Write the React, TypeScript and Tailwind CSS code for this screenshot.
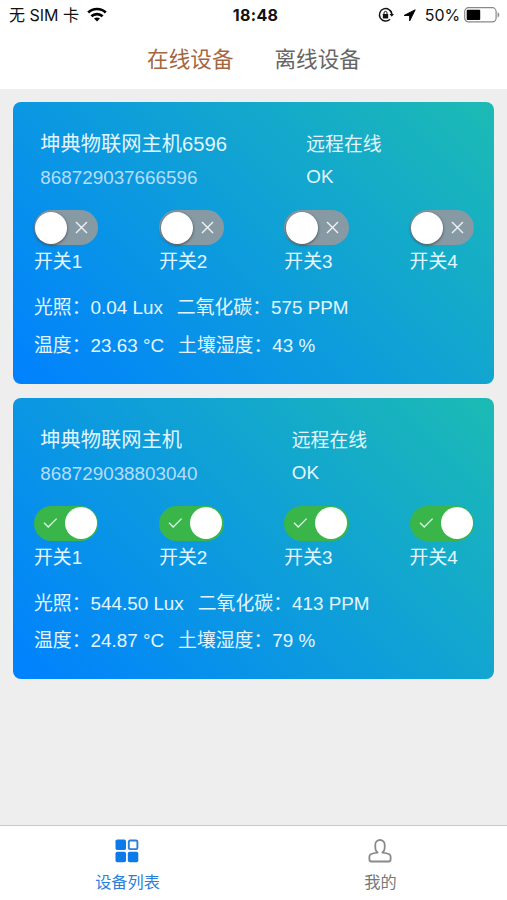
import React from "react";

type Device = {
  name: string;
  imei: string;
  switches: boolean;
  light: string;
  co2: string;
  temperature: string;
  humidity: string;
  headWidth: string;
};

const devices: Device[] = [
  {
    name: "坤典物联网主机6596",
    imei: "868729037666596",
    switches: false,
    light: "0.04 Lux",
    co2: "575 PPM",
    temperature: "23.63 °C",
    humidity: "43 %",
    headWidth: "w-[266px]",
  },
  {
    name: "坤典物联网主机",
    imei: "868729038803040",
    switches: true,
    light: "544.50 Lux",
    co2: "413 PPM",
    temperature: "24.87 °C",
    humidity: "79 %",
    headWidth: "w-[251.5px]",
  },
];

function StatusBar() {
  return (
    <div className="grid h-[30px] grid-cols-3 items-center pr-[7px] pl-[9px] font-['Inter','Noto_Sans_CJK_SC',sans-serif] text-[16px] leading-[30px] text-[#111]">
      <div className="flex items-center">
        <span className="whitespace-pre">无 SIM 卡</span>
        <svg className="mb-[2px] ml-[8px]" width="20" height="15" viewBox="0 0 20 15" fill="none" stroke="#000" strokeWidth="2.7">
          <path d="M1.2 5.5C6 .8 14 .8 18.8 5.5" />
          <path d="M4.4 9.2c3.1-2.9 8.1-2.9 11.2 0" />
          <path d="M10 14.6l-3-3c1.7-1.6 4.3-1.6 6 0z" fill="#000" stroke="none" />
        </svg>
      </div>
      <div className="pl-[2px] text-center text-[16px] font-bold tracking-[0.35px]">18:48</div>
      <div className="flex items-center justify-end">
        <svg width="17" height="16" viewBox="0 0 17 16" fill="none" stroke="#111" strokeWidth="1.4">
          <path d="M13.8 7.2A6.2 6.2 0 1 0 12 12.2" />
          <path d="M13.9 6.8A6.2 6.2 0 0 0 12 3.2" />
          <path d="M11.5 7h4.500l-2.200 2.800z" fill="#111" stroke="none" />
          <rect x="4.800" y="7" width="5.400" height="4.400" rx=".6" fill="#111" stroke="none" />
          <path d="M6 7.200V5.900a1.500 1.500 0 0 1 3 0v1.300" strokeWidth="1" />
        </svg>
        <svg className="ml-[8px]" width="13" height="13" viewBox="0 0 13 13">
          <path d="M12.2.8L1.2 6.4h5.5v5.4z" fill="#000" stroke="#000" strokeWidth="1" strokeLinejoin="round" />
        </svg>
        <span className="ml-[9px] tracking-[-0.1px]">50%</span>
        <svg className="ml-[4px]" width="36" height="16" viewBox="0 0 36 16">
          <rect x=".7" y=".7" width="31.4" height="14.2" rx="3.8" fill="#fff" stroke="#888" strokeWidth="1.2" />
          <rect x="2.7" y="2.7" width="13.5" height="10.2" rx="1" fill="#000" />
          <path d="M33.6 5.2c2.2.8 2.2 4.4 0 5.2z" fill="#888" />
        </svg>
      </div>
    </div>
  );
}

function Toggle({ on }: { on: boolean }) {
  if (on) {
    return (
      <div className="flex h-[35px] w-[64.5px] items-center justify-between rounded-full bg-[#39b54a] pr-[1.5px] pl-[9px]">
        <svg width="15" height="12" viewBox="0 0 15 12" fill="none" stroke="#dff8e4" strokeWidth="1.3">
          <path d="M1 5.8l4.2 4.2L13.6 1.6" />
        </svg>
        <div className="size-[32px] rounded-full bg-white" />
      </div>
    );
  }
  return (
    <div className="flex h-[35px] w-[64.5px] items-center justify-between rounded-full bg-[#8799a3] pr-[10px] pl-[1.5px]">
      <div className="size-[32px] rounded-full bg-white shadow-[0_1px_3px_rgba(0,0,0,0.5)]" />
      <svg width="13" height="13" viewBox="0 0 13 13" fill="none" stroke="#eef4f7" strokeWidth="1.4">
        <path d="M1 1l11 11M12 1L1 12" />
      </svg>
    </div>
  );
}

function DeviceCard({ device }: { device: Device }) {
  return (
    <section className="h-[281.5px] rounded-[8px] bg-[linear-gradient(45deg,#0081ff,#1cbbb4)] pt-[25px] pl-[20.7px] text-[18.85px] text-[#e3f6ff]">
      <div className="flex pl-[6.3px]">
        <div className={device.headWidth}>
          <h2 className="h-[34px] text-[20.25px] leading-[34px]">{device.name}</h2>
          <p className="h-[34px] leading-[34px] text-[#b5ddfa]">{device.imei}</p>
        </div>
        <div>
          <p className="h-[33px] leading-[35px]">远程在线</p>
          <p className="h-[34px] leading-[34px]">OK</p>
        </div>
      </div>
      <div className="mt-[15px] flex">
        {[1, 2, 3, 4].map((n) => (
          <div key={n} className="w-[125.2px] shrink-0">
            <Toggle on={device.switches} />
            <p className="h-[34px] leading-[34px]">开关{n}</p>
          </div>
        ))}
      </div>
      <div className="mt-[10px] leading-[37.8px]">
        <p className="flex gap-[14px]">
          <span>光照：{device.light}</span>
          <span>二氧化碳：{device.co2}</span>
        </p>
        <p className="flex gap-[14px]">
          <span>温度：{device.temperature}</span>
          <span>土壤湿度：{device.humidity}</span>
        </p>
      </div>
    </section>
  );
}

export default function App() {
  return (
    <div className="flex h-[900px] w-[507px] flex-col overflow-hidden bg-[#eee] font-['Liberation_Sans','Noto_Sans_CJK_SC',sans-serif]">
      <header className="h-[88.5px] bg-white">
        <StatusBar />
        <nav className="flex h-[58px] justify-center gap-[41px] pt-[1px] pl-[1px] text-[21.6px] leading-[58px]">
          <span className="text-[#a5673f]">在线设备</span>
          <span className="text-[#666]">离线设备</span>
        </nav>
      </header>
      <main className="flex flex-1 flex-col gap-[14px] pt-[13.5px] pr-[13px] pl-[13.3px]">
        {devices.map((d) => (
          <DeviceCard key={d.imei} device={d} />
        ))}
      </main>
      <footer className="flex h-[75.5px] border-t-[1.5px] border-[#c8c8c8] bg-white text-[16.2px] leading-[24px]">
        <div className="flex flex-1 flex-col items-center pt-[13px] pl-[1px] text-[#2c80dc]">
          <svg className="mr-[1px]" width="24" height="24" viewBox="0 0 24 24" fill="#0d7aec">
            <rect x=".5" y=".5" width="10.5" height="10.5" rx="1.8" />
            <rect x="13.8" y="1.5" width="8.6" height="8.6" rx="1.3" fill="#fff" stroke="#2b7fd8" strokeWidth="1.9" />
            <rect x=".5" y="12.8" width="10.5" height="10.5" rx="1.8" />
            <rect x="12.8" y="12.8" width="10.5" height="10.5" rx="1.8" />
          </svg>
          <span className="mt-[7px]">设备列表</span>
        </div>
        <div className="flex flex-1 flex-col items-center pt-[13px] text-[#777]">
          <svg className="mr-[1px]" width="24" height="24" viewBox="0 0 24 24" fill="none" stroke="#8a8a8a" strokeWidth="1.8" strokeLinejoin="round">
            <path d="M12 1C9.200 1 7.300 2.900 7.300 5.600V9c0 2 .9 3.600 2.300 4.600-2.900.3-5.300.9-6.800 1.700C1.700 15.900 1.400 16.600 1.400 17.600v2.900c0 1.400.7 2 2 2h17.200c1.300 0 2-.6 2-2v-2.900c0-1-.3-1.700-1.400-2.300-1.500-.8-3.900-1.400-6.800-1.700 1.400-1 2.300-2.600 2.300-4.600V5.600C16.700 2.900 14.800 1 12 1z" />
          </svg>
          <span className="mt-[7px]">我的</span>
        </div>
      </footer>
    </div>
  );
}
